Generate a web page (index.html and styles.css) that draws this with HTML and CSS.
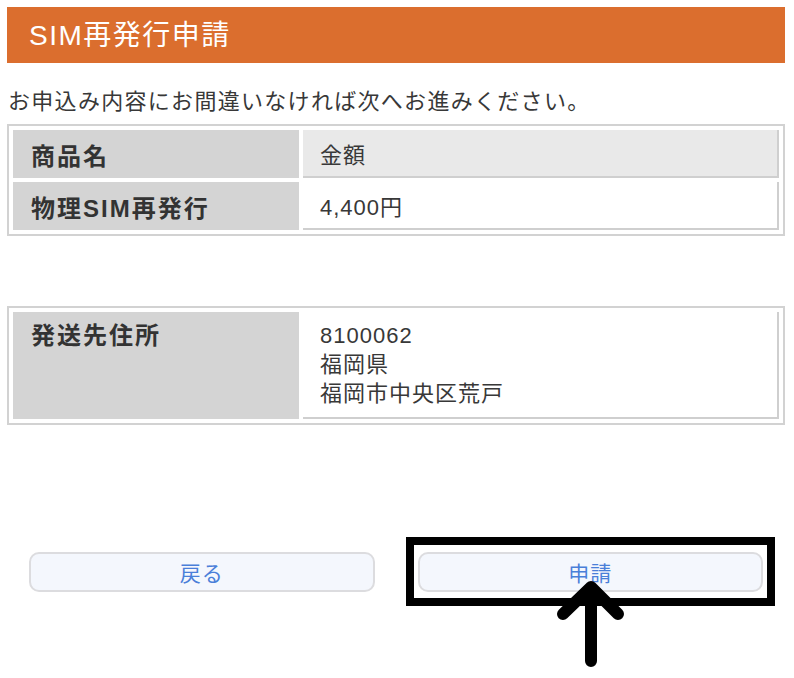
FILE: index.html
```html
<!DOCTYPE html>
<html lang="ja">
<head>
<meta charset="UTF-8">
<meta name="viewport" content="width=device-width, initial-scale=1.0">
<title>SIM再発行申請</title>
<link rel="stylesheet" href="styles.css">
</head>
<body>
<div class="page">
    <h1 class="title-bar">SIM再発行申請</h1>

    <p class="lead">お申込み内容にお間違いなければ次へお進みください。</p>

    <table class="info-table">
        <tr>
            <th>商品名</th>
            <td class="col-head">金額</td>
        </tr>
        <tr>
            <th>物理SIM再発行</th>
            <td>4,400円</td>
        </tr>
    </table>

    <table class="info-table address-table">
        <tr>
            <th>発送先住所</th>
            <td>8100062<br>福岡県<br>福岡市中央区荒戸</td>
        </tr>
    </table>

    <div class="actions">
        <div class="btn-wrap">
            <button type="button" class="btn">戻る</button>
        </div>
        <div class="btn-wrap">
            <button type="button" class="btn">申請</button>
            <!-- annotation: highlight box + arrow -->
            <div class="highlight"></div>
            <svg class="arrow" width="72" height="92" viewBox="0 0 72 92">
                <path d="M36 8 L36 82 M8 35 L36 8 L63 35" fill="none" stroke="#000" stroke-width="12" stroke-linecap="round" stroke-linejoin="round"/>
            </svg>
        </div>
    </div>
</div>
</body>
</html>
```

FILE: styles.css
```css
html, body {
    height: 100%;
}

body {
    margin: 0;
    padding: 0;
    background-color: #fff;
    color: #383838;
    font-family: "Liberation Sans", "Noto Sans CJK JP", sans-serif;
}

.page {
    box-sizing: border-box;
    min-height: 100%;
    padding: 7px 9px 0 7px;
}

.title-bar {
    margin: 0;
    height: 56px;
    line-height: 58px;
    padding-left: 22px;
    background-color: #db6e2e;
    color: #fff;
    font-size: 28px;
    font-weight: normal;
    letter-spacing: 1.5px;
}

.lead {
    margin: 24px 0 7px 1px;
    line-height: 30px;
    font-size: 22px;
    letter-spacing: 1.3px;
}

.info-table {
    width: 100%;
    border: 2px solid #d2d2d2;
    border-collapse: separate;
    border-spacing: 4px;
}

.info-table th {
    width: 268px;
    height: 48px;
    padding: 0 0 0 18px;
    background-color: #d4d4d4;
    text-align: left;
    font-size: 24px;
    font-weight: bold;
    letter-spacing: 2px;
    color: #333;
}

.info-table td {
    padding: 0 0 0 17px;
    font-size: 22px;
    letter-spacing: 1px;
    border-right: 2px solid #cfcfcf;
    border-bottom: 2px solid #cfcfcf;
}

.info-table td.col-head {
    background-color: #e9e9e9;
}

.address-table {
    margin-top: 70px;
}

.address-table th {
    height: auto;
    vertical-align: top;
    padding-top: 9px;
    line-height: 30px;
}

.address-table td {
    padding-top: 9px;
    padding-bottom: 9px;
    line-height: 29px;
}

.actions {
    display: flex;
    gap: 43px;
    margin-top: 127px;
    padding: 0 22px;
}

.btn-wrap {
    flex: 1;
    position: relative;
}

.btn {
    display: block;
    width: 100%;
    height: 40px;
    border: 2px solid #dcdcdf;
    border-radius: 10px;
    background-color: #f4f7fd;
    color: #4a7fd9;
    font-family: "Liberation Sans", "Noto Sans CJK JP", sans-serif;
    font-size: 21px;
    letter-spacing: 1px;
}

.highlight {
    position: absolute;
    top: -15px;
    left: -12px;
    right: -12px;
    bottom: -14px;
    border: 8px solid #000;
}

.arrow {
    position: absolute;
    left: 137px;
    top: 27px;
}
```
